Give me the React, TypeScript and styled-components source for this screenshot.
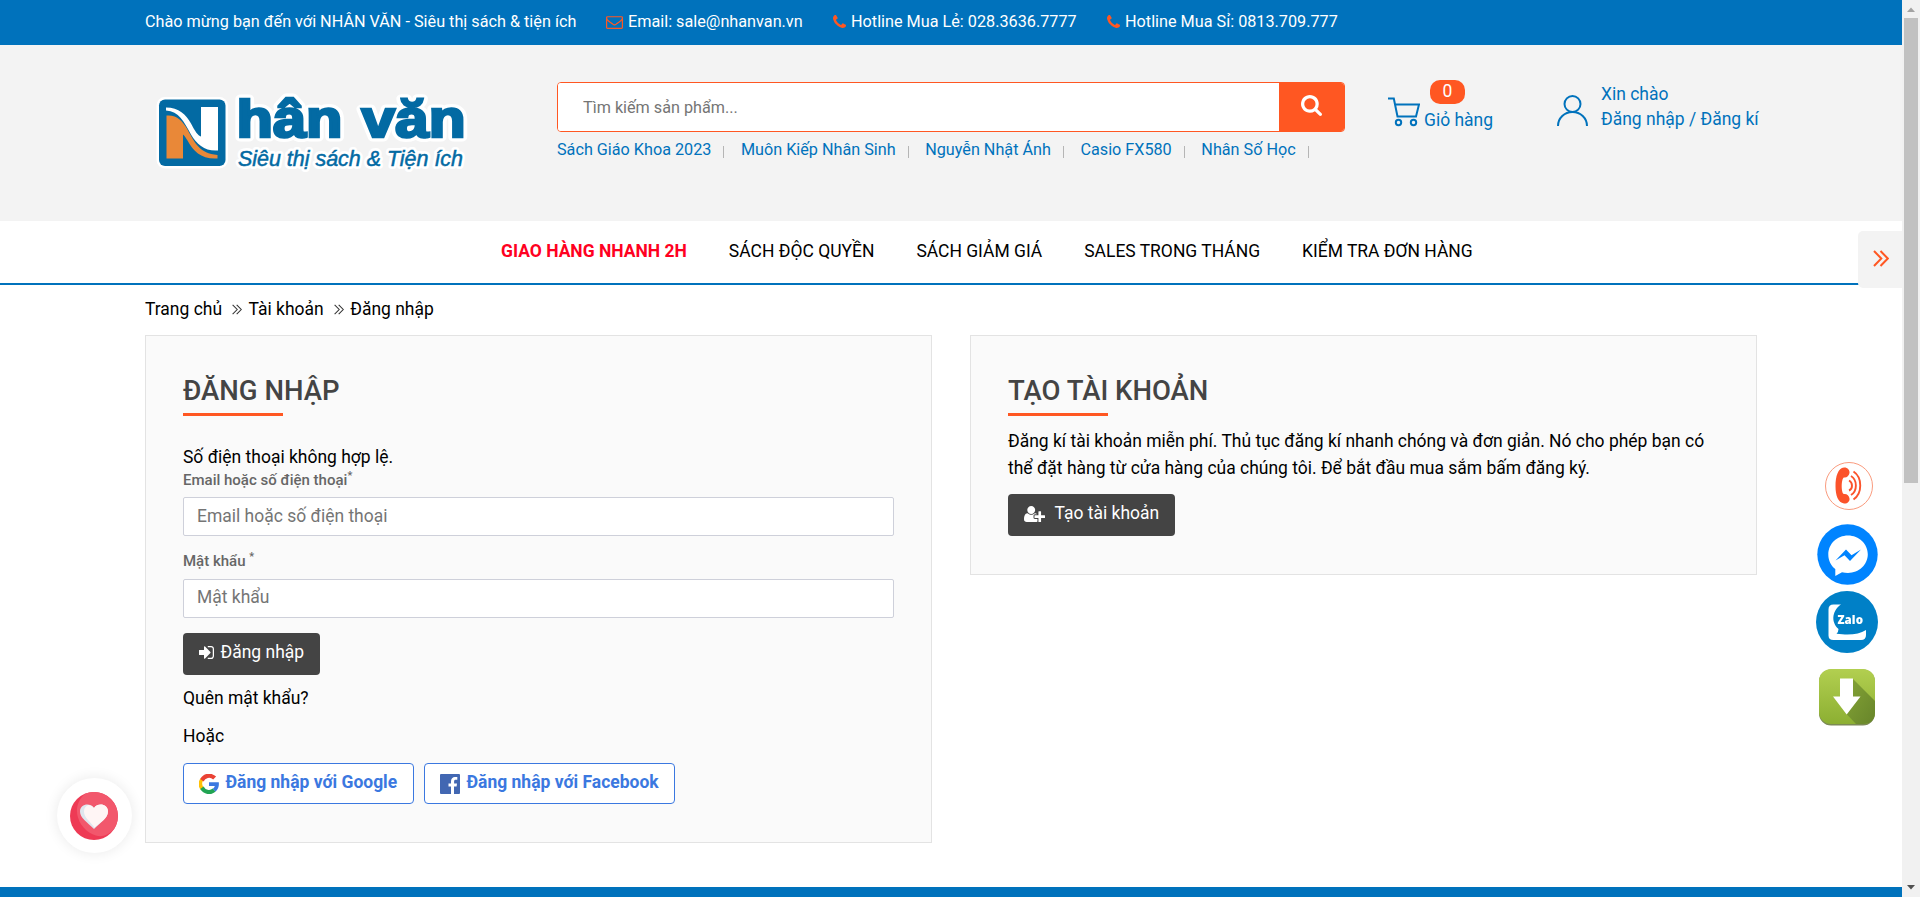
import React from "react";
import styled, { createGlobalStyle, css } from "styled-components";

const BLUE = "#0072bc";
const ORANGE = "#ff5722";

const Global = createGlobalStyle`
  * { box-sizing: border-box; }
  body {
    margin: 0;
    height: 897px;
    overflow: hidden;
    background: #fff;
    font: 400 17.48px/25px Roboto, "Liberation Sans", sans-serif;
    color: #000;
  }
  a { color: inherit; text-decoration: none; }
  input, button { font: inherit; }
`;

const Window = styled.div`
  display: flex;
  height: 897px;
  overflow: hidden;
`;
const Page = styled.div`
  width: 1902px;
  display: flex;
  flex-direction: column;
`;
const Container = styled.div`
  width: 1612px;
  margin: 0 auto;
`;

/* top bar */
const TopBar = styled.div`
  height: 45px;
  background: ${BLUE};
  color: #fff;
  font-size: 16.23px;
`;
const TopRow = styled(Container)`
  display: flex;
  align-items: center;
  height: 43px;
`;
const TopText = styled.span<{ $w: number }>`
  width: ${(p) => p.$w}px;
  white-space: nowrap;
  display: flex;
  align-items: center;
  gap: 5px;
`;

/* header */
const Header = styled.header`
  height: 176px;
  background: #f3f3f3;
`;
const HeaderRow = styled(Container)`
  display: flex;
  align-items: flex-start;
`;
const LogoBox = styled.a`
  width: 412px;
  flex: none;
  padding: 43px 0 0 5px;
`;
const SearchArea = styled.div`
  width: 788px;
  flex: none;
  padding-top: 37px;
`;
const SearchForm = styled.div`
  display: flex;
  height: 50px;
  border: 1px solid ${ORANGE};
  border-radius: 4px;
  background: #fff;
  overflow: hidden;
`;
const SearchInput = styled.input`
  flex: 1;
  border: 0;
  padding: 0 25px;
  font-size: 16.2px;
  outline: 0;
  &::placeholder { color: #757575; }
`;
const SearchButton = styled.button`
  width: 65px;
  border: 0;
  padding: 0 0 4px;
  background: ${ORANGE};
  display: flex;
  align-items: center;
  justify-content: center;
`;
const Keywords = styled.div`
  display: flex;
  align-items: center;
  padding-top: 5px;
  color: ${BLUE};
  font-size: 16.2px;
`;
const Keyword = styled.a`
  display: flex;
  align-items: center;
  margin-right: 16.6px;
  white-space: nowrap;
  &::after {
    content: "";
    width: 1px;
    height: 12px;
    margin: 5px 0 0 12px;
    background: #b5b5b5;
  }
`;
const Cart = styled.a`
  display: flex;
  align-items: flex-end;
  width: 212px;
  flex: none;
  padding: 35px 0 0 43px;
  color: ${BLUE};
`;
const CartInfo = styled.span`
  display: flex;
  flex-direction: column;
  padding-left: 4px;
`;
const Badge = styled.span`
  width: 35px;
  height: 24px;
  margin: 0 0 4px 6px;
  border-radius: 10px;
  background: ${ORANGE};
  color: #fff;
  line-height: 22px;
  text-align: center;
`;
const Account = styled.div`
  display: flex;
  flex: none;
  gap: 13px;
  padding-top: 37px;
  color: ${BLUE};
  white-space: nowrap;
  svg { margin-top: 13px; flex: none; }
`;

/* navigation */
const Nav = styled.nav`
  height: 64px;
  border-bottom: 2px solid ${BLUE};
  display: flex;
  justify-content: space-between;
`;
const NavList = styled.div`
  display: flex;
  gap: 42px;
  padding: 18px 0 0 501px;
`;
const NavLink = styled.a<{ $hot?: boolean }>`
  white-space: nowrap;
  ${(p) => p.$hot && css`color: #ff0021; font-weight: 700;`}
`;
const SideTab = styled.button`
  width: 44px;
  height: 57px;
  margin-top: 10px;
  flex: none;
  padding: 0 0 2px 1px;
  border: 0;
  border-radius: 5px 0 0 5px;
  background: #f3f3f3;
  display: flex;
  align-items: center;
  justify-content: center;
  z-index: 1;
`;

const Breadcrumb = styled(Container)`
  display: flex;
  align-items: center;
  height: 50px;
  padding-bottom: 2px;
  svg { margin: 0 6.5px 0 10px; }
`;

/* panels */
const Panels = styled(Container)`
  display: grid;
  grid-template-columns: 787px 787px;
  gap: 38px;
  align-items: start;
`;
const Panel = styled.section<{ $h: number }>`
  height: ${(p) => p.$h}px;
  padding: 37px 37px 0;
  border: 1px solid #e3e3e3;
  background: #fafafa;
`;
const Title = styled.h1`
  margin: 0;
  font-size: 27.5px;
  line-height: 36px;
  font-weight: 500;
  color: #444;
  &::after {
    content: "";
    display: block;
    width: 100px;
    height: 3px;
    margin-top: 4px;
    background: ${ORANGE};
  }
`;
const ErrorText = styled.p`
  margin: 29px 0 0;
  line-height: 25px;
`;
const Label = styled.label<{ $top: number }>`
  display: block;
  margin-top: ${(p) => p.$top}px;
  height: 22px;
  font-size: 15px;
  line-height: 22px;
  font-weight: 500;
  color: #666;
  sup { font-size: 11px; line-height: 0; vertical-align: 6px; }
`;
const Field = styled.input<{ $top: number }>`
  display: block;
  width: 711px;
  height: 39px;
  margin-top: ${(p) => p.$top}px;
  padding: 0 13px 2px;
  border: 1px solid #ced0da;
  border-radius: 2px;
  background: #fff;
  &::placeholder { color: #757575; }
  &[type="password"] { padding-bottom: 3px; }
`;
const DarkButton = styled.button<{ $w: number; $top: number; $gap: number }>`
  display: flex;
  align-items: center;
  gap: ${(p) => p.$gap}px;
  width: ${(p) => p.$w}px;
  height: 42px;
  margin-top: ${(p) => p.$top}px;
  padding: 0 0 3px 16px;
  border: 0;
  border-radius: 4px;
  background: #444;
  color: #fff;
  white-space: nowrap;
`;
const Line = styled.p<{ $top: number }>`
  margin: ${(p) => p.$top}px 0 0;
`;
const SocialRow = styled.div`
  display: flex;
  gap: 10px;
  margin-top: 14px;
`;
const SocialButton = styled.button<{ $w: number }>`
  display: flex;
  align-items: center;
  gap: 6.5px;
  width: ${(p) => p.$w}px;
  height: 41px;
  padding: 0 0 0 15px;
  border: 1px solid #3b78e0;
  border-radius: 4px;
  background: #fff;
  color: #3b78e0;
  font-weight: 700;
  white-space: nowrap;
  span { padding-bottom: 3px; }
`;
const Intro = styled.p`
  margin: 12px 0 0;
  line-height: 27px;
`;
const FooterStrip = styled.footer`
  height: 10px;
  margin-top: 44px;
  background: ${BLUE};
`;

/* overlays */
const Wish = styled.div`
  position: fixed;
  left: 56.5px;
  top: 778px;
  width: 75px;
  height: 75px;
  border-radius: 50%;
  background: #fff;
  box-shadow: 0 0 14px rgba(0, 0, 0, 0.09);
  display: flex;
  align-items: center;
  justify-content: center;
`;
const Contacts = styled.div`
  position: fixed;
  left: 1816px;
  top: 462px;
  width: 62px;
  display: flex;
  flex-direction: column;
  align-items: center;
  svg { display: block; }
`;
const ContactLink = styled.a<{ $top?: number; $shift?: number }>`
  margin-top: ${(p) => p.$top ?? 0}px;
  margin-left: ${(p) => p.$shift ?? 0}px;
`;

/* scrollbar */
const Scrollbar = styled.div`
  width: 18px;
  background: #f1f1f1;
  display: flex;
  flex-direction: column;
  align-items: center;
  justify-content: space-between;
`;
const Thumb = styled.div`
  width: 14px;
  height: 465px;
  background: #c1c1c1;
`;
const ScrollTop = styled.div`
  display: flex;
  flex-direction: column;
  align-items: center;
`;
const ScrollArrow = styled.svg`
  display: block;
`;

const FA = {
  search: "M1216 832q0-185-131.5-316.5t-316.5-131.5-316.5 131.5-131.5 316.5 131.5 316.5 316.5 131.5 316.5-131.5 131.5-316.5zm512 832q0 52-38 90t-90 38q-54 0-90-38l-343-342q-179 124-399 124-143 0-273.5-55.5t-225-150-150-225-55.5-273.5 55.5-273.5 150-225 225-150 273.5-55.5 273.5 55.5 225 150 150 225 55.5 273.5q0 220-124 399l343 343q37 37 37 90z",
  phone: "M1600 1240q0 27-10 70.5t-21 68.5q-21 50-122 106-94 51-186 51-27 0-52.5-3.5t-57.5-12.5-47.5-14.5-55.5-20.5-49-18q-98-35-175-83-128-79-264.5-215.5t-215.5-264.5q-48-77-83-175-3-9-18-49t-20.5-55.5-14.5-47.5-12.5-57.5-3.5-52.5q0-92 51-186 56-101 106-122 25-11 68.5-21t70.5-10q14 0 21 3 18 6 53 76 11 19 30 54t35 63.5 31 53.5q3 4 17.5 25t21.5 35.5 7 28.5q0 20-28.5 50t-62 55-62 53-28.5 46q0 9 5 22.5t8.5 20.5 14 24 11.5 19q76 137 174 235t235 174q2 1 19 11.5t24 14 20.5 8.5 22.5 5q18 0 46-28.5t53-62 55-62 50-28.5q14 0 28.5 7t35.5 21.5 25 17.5q25 15 53.5 31t63.5 35 54 30q70 35 76 53 3 7 3 21z",
  mail: "M1664 1504v-768q-32 36-69 66-268 206-426 338-51 43-83 67t-86.5 48.5-102.5 24.5h-2q-48 0-102.5-24.5t-86.5-48.5-83-67q-158-132-426-338-37-30-69-66v768q0 13 9.5 22.5t22.5 9.5h1472q13 0 22.5-9.5t9.5-22.5zm0-1051v-24.5l-.5-13-3-12.5-5.5-9-9-7.5-14-2.5h-1472q-13 0-22.5 9.5t-9.5 22.5q0 168 147 284 193 152 401 317 6 5 35 29.5t46 37.5 44.5 31.5 50.5 27.5 43 9h2q20 0 43-9t50.5-27.5 44.5-31.5 46-37.5 35-29.5q208-165 401-317 54-43 100.5-115.5t46.5-131.5zm128-37v1088q0 66-47 113t-113 47h-1472q-66 0-113-47t-47-113v-1088q0-66 47-113t113-47h1472q66 0 113 47t47 113z",
  signIn: "M1312 896q0 26-19 45l-544 544q-19 19-45 19t-45-19-19-45v-288h-448q-26 0-45-19t-19-45v-384q0-26 19-45t45-19h448v-288q0-26 19-45t45-19 45 19l544 544q19 19 19 45zm352-352v704q0 119-84.5 203.5t-203.5 84.5h-320q-13 0-22.5-9.5t-9.5-22.5q0-4-1-20t-.5-26.5 3-23.5 10-19.5 20.5-6.5h320q66 0 113-47t47-113v-704q0-66-47-113t-113-47h-312l-11.5-1-11.5-3-8-5.5-7-9-2-13.5q0-4-1-20t-.5-26.5 3-23.5 10-19.5 20.5-6.5h320q119 0 203.5 84.5t84.5 203.5z",
  userPlus: "M704 896q-159 0-271.5-112.5T320 512t112.5-271.5T704 128t271.5 112.5T1088 512 975.5 783.5 704 896zm960 128h352q13 0 22.5 9.5t9.5 22.5v192q0 13-9.5 22.5t-22.5 9.5h-352v352q0 13-9.5 22.5t-22.5 9.5h-192q-13 0-22.5-9.5t-9.5-22.5v-352h-352q-13 0-22.5-9.5t-9.5-22.5v-192q0-13 9.5-22.5t22.5-9.5h352V672q0-13 9.5-22.5t22.5-9.5h192q13 0 22.5 9.5t9.5 22.5v352zm-736 224q0 52 38 90t90 38h256v238q-68 50-171 50H267q-121 0-194-69T0 1405q0-53 3.5-103.5t14-109T44 1084t43-97.5 62-81 85.5-53.5T346 832q19 0 39 17 79 61 154.5 91.5T704 971t164.5-30.5T1023 849q20-17 39-17 132 0 217 96h-223q-52 0-90 38t-38 90v192z",
};

type GlyphProps = { d: string; box: string; w: number; h: number; color: string };
const Glyph = ({ d, box, w, h, color }: GlyphProps) => (
  <svg width={w} height={h} viewBox={box} fill={color} preserveAspectRatio="none"><path d={d} /></svg>
);

const Chevrons = ({ w, h, color, stroke }: { w: number; h: number; color: string; stroke: number }) => (
  <svg width={w} height={h} viewBox="0 0 16 17" fill="none" stroke={color} strokeWidth={stroke}>
    <path d="M1 1l7.3 7.5L1 16M7.5 1l7.3 7.5L7.5 16" />
  </svg>
);

const wordmark = {
  fontFamily: "Liberation Sans",
  fontWeight: 700,
  fontSize: 51,
  lengthAdjust: "spacingAndGlyphs",
} as const;
const tagline = {
  fontFamily: "Liberation Sans",
  fontStyle: "italic",
  fontSize: 21.5,
  textLength: 225,
  lengthAdjust: "spacingAndGlyphs",
} as const;

const Logo = () => (
  <svg width="330" height="96" viewBox="150 88 330 96">
    <g stroke="#fff" strokeLinejoin="round" fill="#fff">
      <rect x="159" y="99.5" width="66.5" height="66.5" rx="6" strokeWidth="5" />
      <text {...wordmark} x="236.5" y="137.3" textLength="106" strokeWidth="9">hân</text>
      <text {...wordmark} x="361.500" y="137.3" textLength="104" strokeWidth="9">văn</text>
      <text {...tagline} x="238" y="166" strokeWidth="6">Siêu thị sách &amp; Tiện ích</text>
    </g>
    <rect x="159" y="99.5" width="66.5" height="66.5" rx="6" fill="#036aa3" />
    <path d="M166 107.500c13 0 20 7 25 16c4 8 7 12 10 13V107h17v43.500c-13 1-21-6-27-16c-7-13-12-23-25-24z" fill="#fff" />
    <path d="M166.500 115.500c10-1 16 5 21 14c7 13 12 24 30 25.500v3.500c-16 1-24-7-30-18c-2-3-3-5-4.500-6v24h-16.500z" fill="#e98838" />
    <g fill="#036aa3" stroke="#036aa3">
      <text {...wordmark} x="236.5" y="137.3" textLength="106" strokeWidth="2.6">hân</text>
      <text {...wordmark} x="361.500" y="137.3" textLength="104" strokeWidth="2.6">văn</text>
      <text {...tagline} x="238" y="166" strokeWidth=".5">Siêu thị sách &amp; Tiện ích</text>
    </g>
  </svg>
);

const keywords = ["Sách Giáo Khoa 2023", "Muôn Kiếp Nhân Sinh", "Nguyễn Nhật Ánh", "Casio FX580", "Nhân Số Học"];
const menu = ["SÁCH ĐỘC QUYỀN", "SÁCH GIẢM GIÁ", "SALES TRONG THÁNG", "KIỂM TRA ĐƠN HÀNG"];

export default function App() {
  return (
    <Window>
      <Global />
      <Page>
        <TopBar>
          <TopRow>
            <TopText $w={461}>Chào mừng bạn đến với NHÂN VĂN - Siêu thị sách &amp; tiện ích</TopText>
            <TopText $w={227}><Glyph d={FA.mail} box="0 128 1792 1536" w={17} h={14} color={ORANGE} />Email: sale@nhanvan.vn</TopText>
            <TopText $w={274}><Glyph d={FA.phone} box="192 128 1408 1408" w={13} h={13} color={ORANGE} />Hotline Mua Lẻ: 028.3636.7777</TopText>
            <TopText $w={240}><Glyph d={FA.phone} box="192 128 1408 1408" w={13} h={13} color={ORANGE} />Hotline Mua Sỉ: 0813.709.777</TopText>
          </TopRow>
        </TopBar>
        <Header>
          <HeaderRow>
            <LogoBox href="#"><Logo /></LogoBox>
            <SearchArea>
              <SearchForm>
                <SearchInput placeholder="Tìm kiếm sản phẩm..." />
                <SearchButton><Glyph d={FA.search} box="64 128 1664 1664" w={21} h={21} color="#fff" /></SearchButton>
              </SearchForm>
              <Keywords>{keywords.map((k) => <Keyword key={k} href="#">{k}</Keyword>)}</Keywords>
            </SearchArea>
            <Cart href="#">
              <svg width="32" height="38" viewBox="0 0 32 38" fill="none" stroke={BLUE} strokeWidth="2">
                <path d="M0 3.500h5.800l3.700 18h18.500l3-12H7" />
                <circle cx="10.500" cy="27.500" r="2.700" /><circle cx="25.500" cy="27.500" r="2.700" />
              </svg>
              <CartInfo><Badge>0</Badge>Giỏ hàng</CartInfo>
            </Cart>
            <Account>
              <svg width="31" height="31" viewBox="0 0 31 31" fill="none" stroke={BLUE} strokeWidth="2">
                <circle cx="15.500" cy="9" r="8" /><path d="M1 31c0-8 6.500-14 14.500-14S30 23 30 31" />
              </svg>
              <div>Xin chào<br />Đăng nhập / Đăng kí</div>
            </Account>
          </HeaderRow>
        </Header>
        <Nav>
          <NavList>
            <NavLink $hot href="#">GIAO HÀNG NHANH 2H</NavLink>
            {menu.map((m) => <NavLink key={m} href="#">{m}</NavLink>)}
          </NavList>
          <SideTab><Chevrons w={16} h={17} color={ORANGE} stroke={2} /></SideTab>
        </Nav>
        <Breadcrumb>
          Trang chủ<Chevrons w={10} h={11} color="#333" stroke={1.7} />
          Tài khoản<Chevrons w={10} h={11} color="#333" stroke={1.7} />
          Đăng nhập
        </Breadcrumb>
        <Panels>
          <Panel $h={508}>
            <Title>ĐĂNG NHẬP</Title>
            <ErrorText>Số điện thoại không hợp lệ.</ErrorText>
            <Label $top={-1}>Email hoặc số điện thoại<sup>*</sup></Label>
            <Field $top={6} placeholder="Email hoặc số điện thoại" />
            <Label $top={14}>Mật khẩu <sup>*</sup></Label>
            <Field $top={7} type="password" placeholder="Mật khẩu" />
            <DarkButton $w={137} $top={15} $gap={6.5}>
              <Glyph d={FA.signIn} box="128 256 1536 1280" w={15} h={13} color="#fff" />Đăng nhập
            </DarkButton>
            <Line $top={11}>Quên mật khẩu?</Line>
            <Line $top={13}>Hoặc</Line>
            <SocialRow>
              <SocialButton $w={231}>
                <svg width="20" height="20" viewBox="0 0 48 48">
                  <path fill="#ffc107" d="M10 15 4 10a24 24 0 0 0 0 28l7-6a15 15 0 0 1-1-17z" />
                  <path fill="#ea4335" d="M3 12a24 24 0 0 1 38-6l-7 7A14.500 14.500 0 0 0 11 18z" />
                  <path fill="#21a453" d="M3 36a24 24 0 0 0 37 6l-7-7a14.500 14.500 0 0 1-22-5z" />
                  <path fill="#3b78e0" d="M24 20h23.500c1 9-1 16-7.500 22l-7-6q4-3 5-7H24z" />
                </svg>
                <span>Đăng nhập với Google</span>
              </SocialButton>
              <SocialButton $w={251}>
                <svg width="20" height="20" viewBox="0 0 20 20">
                  <rect width="20" height="20" rx="1" fill="#4267b2" />
                  <path fill="#fff" d="M11 20v-7.500H8.500v-3H11V7.300C11 4.600 12.600 3 15 3h2.300v2.800h-1.500c-1.300 0-1.700.6-1.700 1.700v2H17l-.4 3H14V20z" />
                </svg>
                <span>Đăng nhập với Facebook</span>
              </SocialButton>
            </SocialRow>
          </Panel>
          <Panel $h={240}>
            <Title>TẠO TÀI KHOẢN</Title>
            <Intro>Đăng kí tài khoản miễn phí. Thủ tục đăng kí nhanh chóng và đơn giản. Nó cho phép bạn có thể đặt hàng từ cửa hàng của chúng tôi. Để bắt đầu mua sắm bấm đăng ký.</Intro>
            <DarkButton $w={167} $top={12} $gap={9.5}>
              <Glyph d={FA.userPlus} box="0 128 2048 1536" w={21} h={16} color="#fff" />Tạo tài khoản
            </DarkButton>
          </Panel>
        </Panels>
        <FooterStrip />
      </Page>
      <Scrollbar>
        <ScrollTop>
          <ScrollArrow width="18" height="18" viewBox="0 0 18 18"><path d="M9 7.500l4 4.500H5z" fill="#a3a3a3" /></ScrollArrow>
          <Thumb />
        </ScrollTop>
        <ScrollArrow width="18" height="18" viewBox="0 0 18 18"><path d="M9 10.500l4-4.500H5z" fill="#505050" /></ScrollArrow>
      </Scrollbar>
      <Wish>
        <svg width="48" height="48" viewBox="0 0 48 48">
          <circle cx="24" cy="24" r="24" fill="#ee3a55" />
          <path d="M15 1.700A24 24 0 0 1 44 37C36 46 28 45 22 42C8 35 0 15 15 1.700z" fill="#f2576c" />
          <path d="M24 37C17 30 10 26 10 19.500c0-7 9.500-9.500 14-3.500c4.500-6 14-3.500 14 3.500C38 26 31 30 24 37z" fill="#dfe6ee" />
          <path d="M24.500 35.500C20 29 14 26 14 19.500c0-3.500 2-6 4.500-6.500q3.500.3 5.500 3c4.500-6 14-3.500 14 3.500C38 26 31 30 24.500 35.500z" fill="#fff5f5" />
        </svg>
      </Wish>
      <Contacts>
        <ContactLink href="#" $shift={4}>
          <svg width="48" height="48" viewBox="0 0 48 48" fill="none">
            <circle cx="24" cy="24" r="23.500" fill="#fff" stroke="#f8906f" strokeWidth=".9" />
            <path fill="#fb532b" d="M19 5.500c-6 .5-8.500 9-8.500 18.500S13 40.500 19 41.500c3 .5 6-2 5.500-5c-.3-3-3-5-5.500-4.500c-3-.5-3-15.500 0-16.500c2.500.5 5-1.500 5.500-4.500c.4-3-2-5.700-5.500-5.500z" />
            <path stroke="#fb532b" strokeWidth="1.900" d="M24 18.500c4 2 4 8.500 0 10M26 14c6.500 4 6.500 15 0 19M28.500 9.500c9 6 9 22 0 28" />
          </svg>
        </ContactLink>
        <ContactLink href="#" $top={14}>
          <svg width="61" height="61" viewBox="0 0 61 61">
            <circle cx="30.500" cy="30.500" r="30.200" fill="#0084ff" />
            <path fill="#fff" d="M31 11.500c-11 0-19.700 8.400-19.700 19c0 6 2.600 11 7 14.600V52l6.700-3.800c2 .6 4 .8 6 .8c11 0 19.800-8.300 19.800-18.700S42 11.500 31 11.500z" />
            <path fill="#0084ff" d="M18.500 36.500 29 25.500l5.500 5.700 9.500-5.700L33 37l-5.500-5.800z" />
          </svg>
        </ContactLink>
        <ContactLink href="#" $top={6}>
          <svg width="62" height="62" viewBox="0 0 62 62">
            <circle cx="31" cy="31" r="31" fill="#0080c7" />
            <path fill="#fff" d="M25 13.500h-7.500q-5 0-5 5v26q0 4.500 5 4.500H45q5 0 5-5v-5q-8 5-21 4.500l-8.500-.8q2-2 2-4.700C14 30 17 19 25 13.500z" />
            <text x="21.500" y="32.500" fontFamily="Open Sans" fontWeight="800" fontSize="11.5" fill="#fff" textLength="25.500">Zalo</text>
          </svg>
        </ContactLink>
        <ContactLink href="#" $top={15} $shift={-1}>
          <svg width="58" height="58" viewBox="0 0 58 58">
            <defs>
              <linearGradient id="green" x1="0" y1="0" x2="0" y2="1"><stop stopColor="#b2cf50" /><stop offset="1" stopColor="#8caf32" /></linearGradient>
              <linearGradient id="shade" x1="0" y1="0" x2="1" y2="1"><stop stopColor="#84a336" /><stop offset="1" stopColor="#67852a" /></linearGradient>
            </defs>
            <rect x="1" y="1.500" width="56" height="56" rx="12" fill="#7c8a55" />
            <rect x="1" y="1" width="56" height="55" rx="12" fill="url(#green)" />
            <path d="M35 11 57 33v12q-1 11-12 11h-7L28.500 46z" fill="url(#shade)" />
            <path d="M22 10.500h13v18h7.500L28.700 46.500 15 28.500h7z" fill="#fff" />
          </svg>
        </ContactLink>
      </Contacts>
    </Window>
  );
}
